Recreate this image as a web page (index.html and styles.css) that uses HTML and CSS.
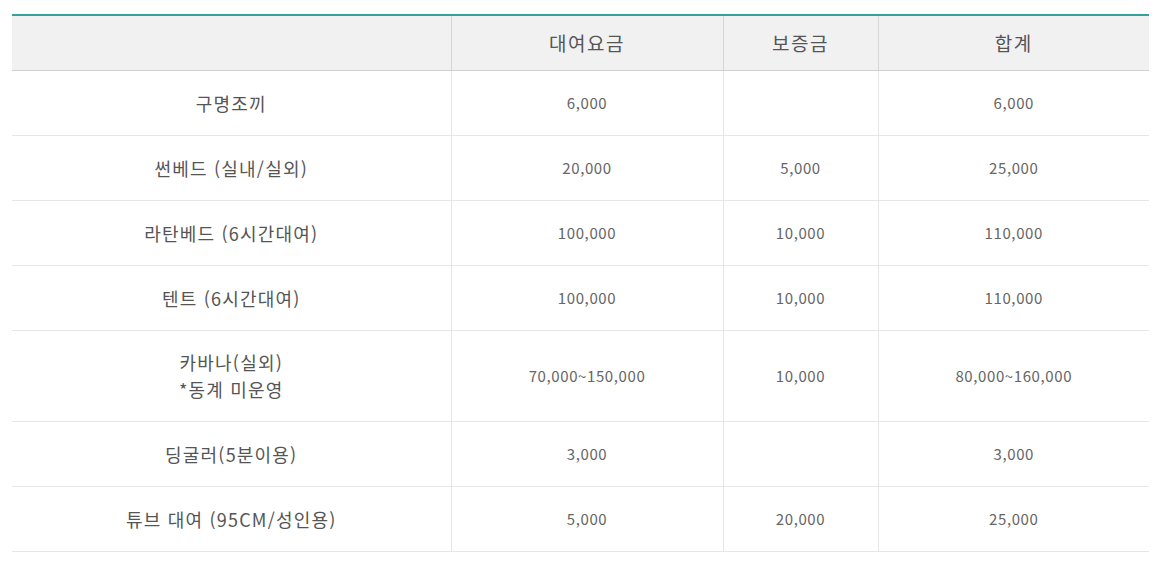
FILE: index.html
```html
<!DOCTYPE html>
<html lang="ko">
<head>
<meta charset="utf-8">
<title>대여요금</title>
<link rel="stylesheet" href="styles.css">
</head>
<body>
<div class="wrap">
<table class="price">
  <colgroup>
    <col class="c1"><col class="c2"><col class="c3"><col class="c4">
  </colgroup>
  <thead>
    <tr><th></th><th>대여요금</th><th>보증금</th><th>합계</th></tr>
  </thead>
  <tbody>
    <tr><td class="name">구명조끼</td><td>6,000</td><td></td><td>6,000</td></tr>
    <tr><td class="name">썬베드 (실내/실외)</td><td>20,000</td><td>5,000</td><td>25,000</td></tr>
    <tr><td class="name">라탄베드 (6시간대여)</td><td>100,000</td><td>10,000</td><td>110,000</td></tr>
    <tr><td class="name">텐트 (6시간대여)</td><td>100,000</td><td>10,000</td><td>110,000</td></tr>
    <tr class="tall"><td class="name">카바나(실외)<br>*동계 미운영</td><td>70,000~150,000</td><td>10,000</td><td>80,000~160,000</td></tr>
    <tr><td class="name">딩굴러(5분이용)</td><td>3,000</td><td></td><td>3,000</td></tr>
    <tr><td class="name">튜브 대여 (95CM/성인용)</td><td>5,000</td><td>20,000</td><td>25,000</td></tr>
  </tbody>
</table>
</div>
</body>
</html>
```
FILE: styles.css
```css
html, body {
  margin: 0;
  padding: 0;
  background: #fff;
}
.wrap {
  padding: 14px 19px 0 12px;
}
.price {
  width: 1137px;
  border-collapse: collapse;
  table-layout: fixed;
  font-family: "Noto Sans CJK KR", "Noto Sans", sans-serif;
  border-top: 2px solid #36a09d;
}
.c1 { width: 439px; }
.c2 { width: 272px; }
.c3 { width: 155px; }
.c4 { width: 271px; }
.price th {
  background: #f1f1f1;
  height: 54px;
  padding: 0;
  font-size: 19px;
  font-weight: normal;
  color: #555;
  letter-spacing: 1.5px;
  line-height: 24px;
  border-bottom: 1px solid #cfcfcf;
  border-left: 1px solid #d6d6d6;
  text-align: center;
}
.price th:first-child { border-left: none; }
.price td {
  height: 64px;
  padding: 0;
  text-align: center;
  font-size: 15px;
  color: #666;
  letter-spacing: 0.6px;
  line-height: 20px;
  border-bottom: 1px solid #e6e6e6;
  border-left: 1px solid #e6e6e6;
}
.price td:first-child { border-left: none; }
.price td.name {
  font-size: 18px;
  color: #555;
  letter-spacing: 1.2px;
  line-height: 27px;
}
.price tr.tall td {
  height: 90px;
}
```
